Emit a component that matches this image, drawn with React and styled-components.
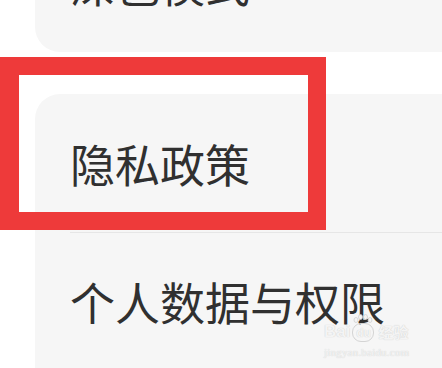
import React from "react";
import styled, { createGlobalStyle } from "styled-components";

const Global = createGlobalStyle`
  html, body { margin: 0; padding: 0; background: #ffffff; overflow: hidden; }
  body { font-family: "Noto Sans CJK SC", "Noto Sans", sans-serif; }
`;

const Page = styled.div`
  position: relative;
  width: 442px;
  height: 368px;
  overflow: hidden;
  background: #ffffff;
`;

const List = styled.div`
  display: flex;
  flex-direction: column;
  gap: 42px;
  margin-top: -86px;
  margin-left: 35px;
  margin-right: -40px;
`;

const Card = styled.div`
  background: #f6f6f6;
  border-radius: 25px;
  display: flex;
  flex-direction: column;
  padding-bottom: ${(p) => (p.$open ? "60px" : "0")};
`;

const Row = styled.div`
  height: 138px;
  display: flex;
  align-items: center;
  box-sizing: border-box;
  font-size: 45px;
  color: #303030;
  border-top: ${(p) => (p.$divider ? "1px solid #e6e6e6" : "none")};
  margin-left: ${(p) => (p.$divider ? "35px" : "0")};
  padding-left: ${(p) => (p.$divider ? "0" : "35px")};
`;

const Highlight = styled.div`
  position: absolute;
  left: 0;
  top: 57px;
  width: 326px;
  height: 173px;
  box-sizing: border-box;
  border: 18px solid #ee3a3a;
  border-left-width: 19px;
  pointer-events: none;
`;

const Watermark = styled.div`
  position: absolute;
  left: 324px;
  top: 322px;
  display: flex;
  flex-direction: column;
  align-items: flex-start;
  color: #f4f4f4;
  text-shadow: 0 0 1px #c4c4c4;
  font-family: "Liberation Sans", "Noto Sans CJK SC", sans-serif;
  pointer-events: none;
`;

const MarkTop = styled.div`
  display: flex;
  align-items: flex-end;
  font-size: 17px;
  font-weight: bold;
  line-height: 20px;
`;

const PawWrap = styled.span`
  position: relative;
  display: inline-flex;
  flex-direction: column;
  align-items: center;
  margin: 0 2px;
`;

const PawToes = styled.svg`
  position: absolute;
  top: -9px;
  left: 1px;
`;

const Bubble = styled.span`
  display: inline-flex;
  align-items: center;
  justify-content: center;
  width: 20px;
  height: 17px;
  border-radius: 9px;
  border: 1px solid #d4d4d4;
  font-size: 12px;
`;

const MarkCn = styled.span`
  font-family: "Noto Sans CJK SC", sans-serif;
  font-size: 15px;
  margin-left: 2px;
`;

const MarkUrl = styled.div`
  font-family: "Liberation Serif", serif;
  font-size: 11px;
  line-height: 14px;
  margin-top: 3px;
  letter-spacing: 0.2px;
`;

export default function App() {
  return (
    <>
      <Global />
      <Page>
        <List>
          <Card>
            <Row>深色模式</Row>
          </Card>
          <Card $open>
            <Row>隐私政策</Row>
            <Row $divider>个人数据与权限</Row>
          </Card>
        </List>
        <Highlight />
        <Watermark>
          <MarkTop>
            Bai
            <PawWrap>
              <PawToes width="20" height="10" viewBox="0 0 20 10">
                <g fill="#f4f4f4" stroke="#d0d0d0" strokeWidth="0.8">
                  <ellipse cx="3" cy="6" rx="2" ry="2.5" />
                  <ellipse cx="7.5" cy="3" rx="2" ry="2.5" />
                  <ellipse cx="12.5" cy="3" rx="2" ry="2.5" />
                  <ellipse cx="17" cy="6" rx="2" ry="2.5" />
                </g>
              </PawToes>
              <Bubble>du</Bubble>
            </PawWrap>
            <MarkCn>经验</MarkCn>
          </MarkTop>
          <MarkUrl>jingyan.baidu.com</MarkUrl>
        </Watermark>
      </Page>
    </>
  );
}
